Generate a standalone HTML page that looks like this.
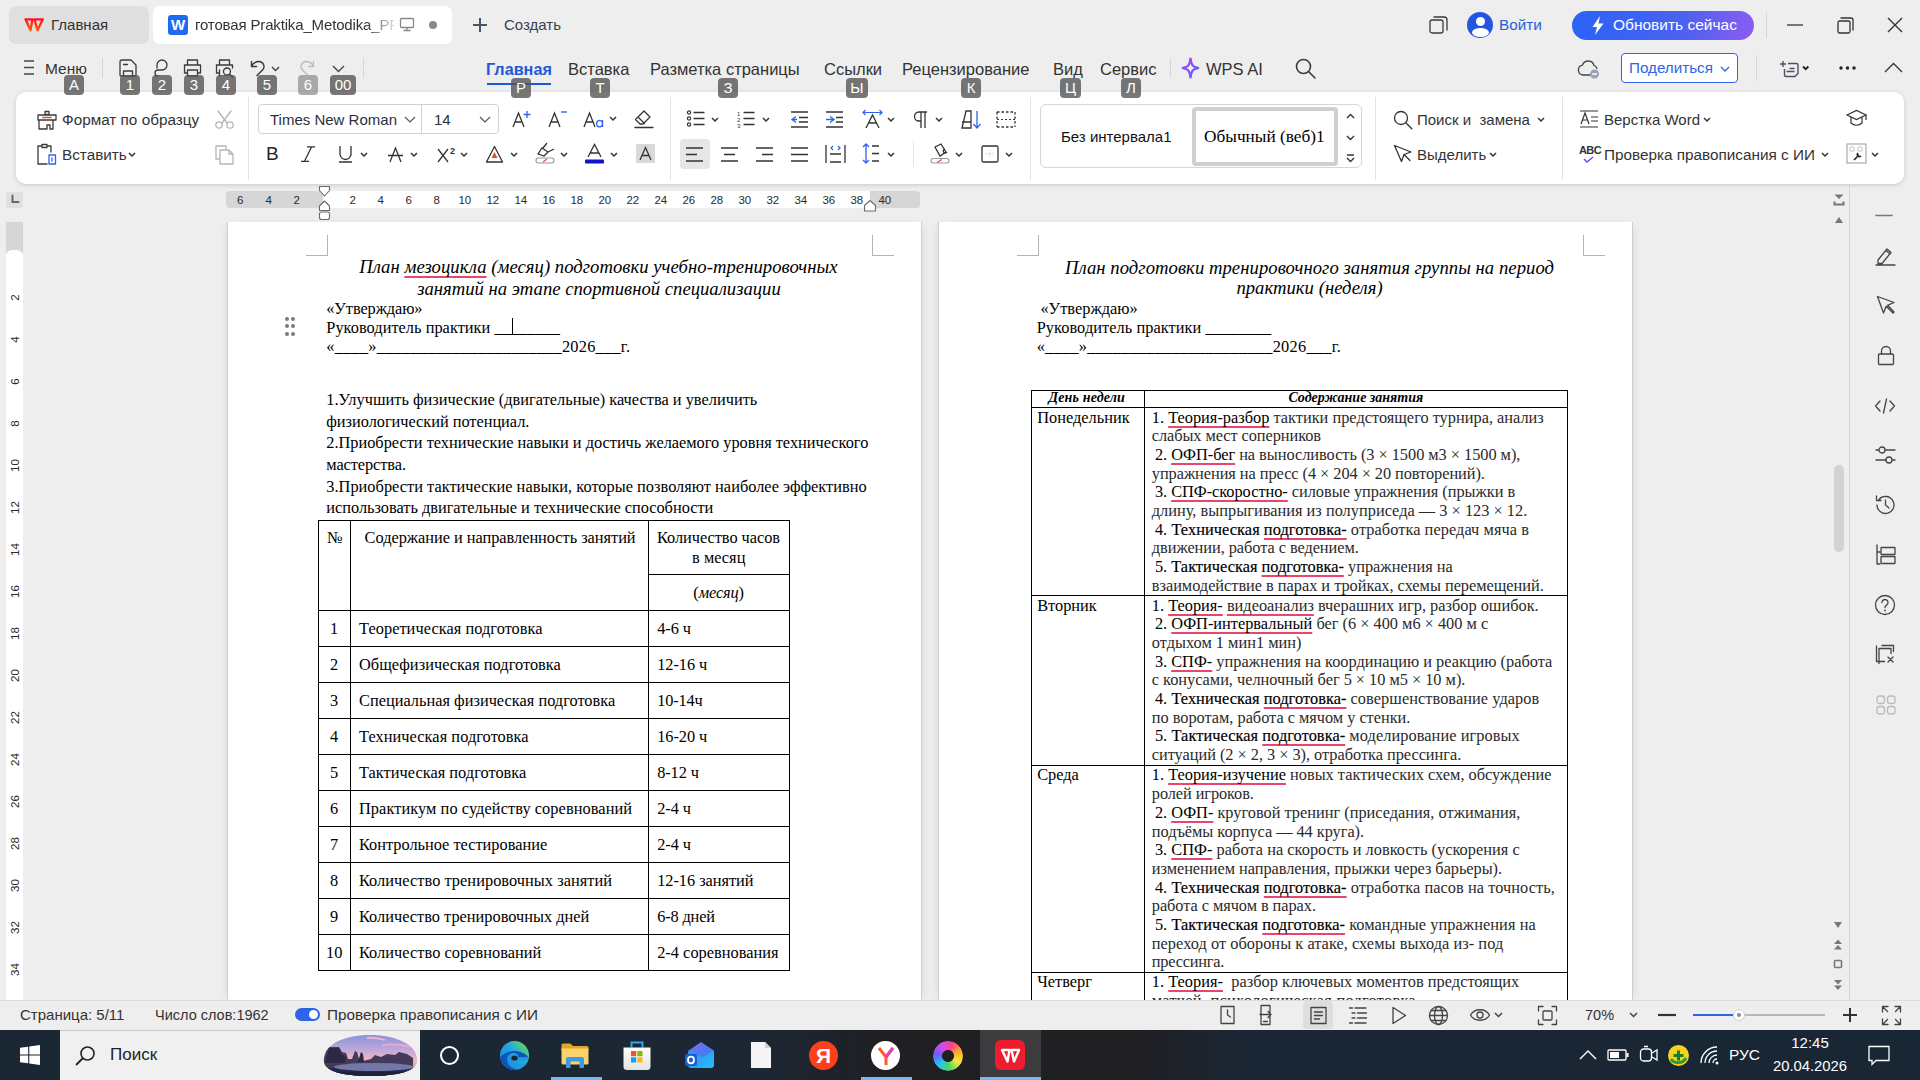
<!DOCTYPE html>
<html><head><meta charset="utf-8">
<style>
*{margin:0;padding:0;box-sizing:border-box}
html,body{width:1920px;height:1080px;overflow:hidden;background:#eeeeee;font-family:"Liberation Sans",sans-serif;color:#262626}
.a{position:absolute}
.t{position:absolute;white-space:nowrap;line-height:20px;height:20px}
.ui{font-size:15px;color:#333}
.bd{position:absolute;height:20px;min-width:20px;padding:0 3px;background:rgba(85,85,85,0.8);color:#fff;border-radius:4px;font-size:15px;line-height:20px;text-align:center}
svg{position:absolute;overflow:visible}
.ic{fill:none;stroke:#3a3a3a;stroke-width:1.3;stroke-linecap:round;stroke-linejoin:round}
.sep{position:absolute;width:1px;background:#d6d6d6}
.serif{font-family:"Liberation Serif",serif;color:#000}
.pg{position:absolute;top:222px;background:#fff;height:778px;overflow:hidden;box-shadow:-1px 0 0 #cdcdcd,1px 0 0 #cdcdcd,-6px 0 8px -4px rgba(0,0,0,0.08),6px 0 8px -4px rgba(0,0,0,0.08)}
.ln{position:absolute;white-space:nowrap;font-family:"Liberation Serif",serif;color:#000}
.sq{text-decoration:underline;text-decoration-color:#e8466e;text-decoration-thickness:1.5px;text-underline-offset:3px;text-decoration-skip-ink:none}
</style></head><body>
<!-- ===== TAB BAR ===== -->
<div class="a" style="left:9px;top:6px;width:140px;height:38px;background:#dfdfdf;border-radius:7px"></div>
<svg style="left:18px;top:12px" width="32" height="24"><defs><linearGradient id="wl" x1="0" y1="0" x2="0" y2="1"><stop offset="0" stop-color="#ff1020"/><stop offset="1" stop-color="#ff5a00"/></linearGradient></defs><path d="M7.5 7.3h7L12.5 18.3zM16.5 7.3h8.3L19.5 18.3z" fill="none" stroke="url(#wl)" stroke-width="2.3" stroke-linejoin="round"/></svg>
<div class="t ui" style="left:51px;top:15px;font-size:15px;color:#333">Главная</div>
<div class="a" style="left:153px;top:6px;width:299px;height:38px;background:#fff;border-radius:7px"></div>
<div class="a" style="left:168px;top:15px;width:20px;height:20px;background:#1f6bf0;border-radius:3px;color:#fff;font-weight:bold;font-size:15px;line-height:20px;text-align:center">W</div>
<div class="t ui" style="left:195px;top:15px;font-size:15px;letter-spacing:-0.15px;color:#333;width:199px;overflow:hidden;-webkit-mask-image:linear-gradient(90deg,#000 86%,rgba(0,0,0,0.15) 100%)">готовая Praktika_Metodika_PF</div>
<svg style="left:400px;top:18px" width="14" height="13" class="ic"><rect x="0.5" y="0.5" width="13" height="9" rx="1" stroke="#888"/><path d="M4 12.5h6M7 10v2.5" stroke="#888"/></svg>
<div class="a" style="left:429px;top:21px;width:8px;height:8px;border-radius:4px;background:#888"></div>
<svg style="left:472px;top:17px" width="16" height="16"><path d="M8 1v14M1 8h14" stroke="#45526b" stroke-width="2"/></svg>
<div class="t ui" style="left:504px;top:15px;font-size:15px;color:#3a4252">Создать</div>
<!-- right window controls -->
<svg style="left:1429px;top:16px" width="19" height="19" class="ic"><rect x="1" y="4" width="13" height="13" rx="2"/><path d="M5 1h10a3 3 0 0 1 3 3v10"/></svg>
<div class="a" style="left:1467px;top:12px;width:26px;height:26px;border-radius:13px;background:#2356e0;overflow:hidden"><div class="a" style="left:8.5px;top:5px;width:9px;height:9px;border-radius:5px;background:#fff"></div><div class="a" style="left:4.5px;top:16px;width:17px;height:9px;border-radius:50%;background:#fff"></div></div>
<div class="t ui" style="left:1499px;top:15px;font-size:15.3px;color:#1f62d6">Войти</div>
<div class="a" style="left:1572px;top:11px;width:182px;height:29px;border-radius:15px;background:linear-gradient(90deg,#2a63f6 0%,#4a62f0 60%,#8a5cf0 100%)"></div>
<svg style="left:1591px;top:16px" width="13" height="19"><path d="M9 0 L1.5 11 H6 L4 19 L12.5 7.5 H7.5 Z" fill="#fff"/></svg>
<div class="t ui" style="left:1613px;top:15px;font-size:15.5px;color:#fff">Обновить сейчас</div>
<div class="sep" style="left:1766px;top:12px;height:26px"></div>
<svg style="left:1787px;top:24px" width="16" height="2"><path d="M0 1h16" stroke="#333" stroke-width="1.3"/></svg>
<svg style="left:1837px;top:17px" width="17" height="17" class="ic"><rect x="1" y="4" width="12" height="12" rx="1.5" stroke="#333"/><path d="M4 1h10a2 2 0 0 1 2 2v10" stroke="#333"/></svg>
<svg style="left:1887px;top:17px" width="16" height="16"><path d="M1 1l14 14M15 1L1 15" stroke="#333" stroke-width="1.4"/></svg>

<!-- ===== MENU ROW ===== -->
<svg style="left:24px;top:60px" width="11" height="15"><path d="M0 1h10M0 7.5h10M0 14h10" stroke="#444" stroke-width="1.3"/></svg>
<div class="t ui" style="left:45px;top:59px;font-size:15.5px">Меню</div>
<div class="sep" style="left:102px;top:58px;height:20px"></div>
<!-- save -->
<svg style="left:119px;top:59px" width="19" height="18" class="ic"><path d="M1 3a2 2 0 0 1 2-2h9l5 5v10a1 1 0 0 1-1 1H2a1 1 0 0 1-1-1z"/><path d="M4.5 17v-5h9v5M4.5 5.5h4"/></svg>
<svg style="left:152px;top:59px" width="17" height="18" class="ic"><path d="M5 9V6a5 5 0 1 1 5 5H6a3 3 0 1 0 0 6"/></svg>
<svg style="left:183px;top:59px" width="19" height="18" class="ic"><path d="M4.5 5V1h10v4M4.5 14H1.5V6h16v8h-3M4.5 11h10v6h-10z"/></svg>
<svg style="left:215px;top:59px" width="19" height="18" class="ic"><path d="M4.5 5V1h10v4M4 14H1.5V6h16v3M4.5 11v6"/><circle cx="12" cy="12.5" r="3.5"/><path d="M14.5 15l3 3"/></svg>
<svg style="left:250px;top:59px" width="16" height="20" class="ic"><path d="M1.5 2.5v5h5M1.5 7.5C3 4 6 2.5 9 2.5a5 5 0 0 1 3.5 8.5L7 16.5" stroke-width="1.4"/></svg>
<svg style="left:271px;top:66px" width="9" height="6"><path d="M1 1l3.5 3.5L8 1" fill="none" stroke="#444" stroke-width="1.4"/></svg>
<svg style="left:299px;top:59px" width="16" height="20" class="ic"><path d="M14.5 2.5v5h-5M14.5 7.5C13 4 10 2.5 7 2.5a5 5 0 0 0-3.5 8.5L9 16.5" stroke="#bdbdbd" stroke-width="1.4"/></svg>
<svg style="left:332px;top:65px" width="13" height="8"><path d="M1 1l5.5 5.5L12 1" fill="none" stroke="#444" stroke-width="1.4"/></svg>
<div class="sep" style="left:363px;top:58px;height:20px"></div>

<div class="t ui" style="left:486px;top:59px;font-size:16.2px;font-weight:bold;color:#1d5ad6">Главная</div>
<div class="a" style="left:487px;top:83px;width:64px;height:2px;background:#1d5ad6"></div>
<div class="t ui" style="left:568px;top:59px;font-size:16.5px">Вставка</div>
<div class="t ui" style="left:650px;top:59px;font-size:16.5px">Разметка страницы</div>
<div class="t ui" style="left:824px;top:59px;font-size:16.5px">Ссылки</div>
<div class="t ui" style="left:902px;top:59px;font-size:16.5px">Рецензирование</div>
<div class="t ui" style="left:1053px;top:59px;font-size:16.5px">Вид</div>
<div class="t ui" style="left:1100px;top:59px;font-size:16.5px">Сервис</div>
<div class="sep" style="left:1170px;top:58px;height:20px"></div>
<svg style="left:1181px;top:57px" width="19" height="22"><defs><linearGradient id="ai" x1="0" y1="0" x2="1" y2="1"><stop offset="0" stop-color="#c33cf4"/><stop offset="1" stop-color="#3b6bff"/></linearGradient></defs><path d="M9.5 1 C10.5 8 11 10 18 11 C11 12 10.5 14 9.5 21 C8.5 14 8 12 1 11 C8 10 8.5 8 9.5 1Z" fill="none" stroke="url(#ai)" stroke-width="2.2"/></svg>
<div class="t ui" style="left:1206px;top:59px;font-size:16.5px">WPS AI</div>
<svg style="left:1295px;top:58px" width="22" height="22" class="ic"><circle cx="8.5" cy="8.5" r="7" stroke-width="1.6"/><path d="M13.5 13.5l6.5 6.5" stroke-width="1.6"/></svg>
<!-- right menu -->
<svg style="left:1577px;top:59px" width="23" height="20" class="ic"><path d="M15 16H6a5 5 0 0 1-.5-9.9A6 6 0 0 1 17 6.5a4.5 4.5 0 0 1 3 3" stroke="#444"/><circle cx="17.5" cy="15" r="4.5" fill="#9aa3b5" stroke="none"/><path d="M15.5 15h4" stroke="#fff"/></svg>
<div class="a" style="left:1621px;top:53px;width:117px;height:30px;border:1.3px solid #2d64e8;border-radius:4px;background:#fff"></div>
<div class="t ui" style="left:1629px;top:58px;font-size:15.2px;color:#2d64e8">Поделиться</div>
<svg style="left:1720px;top:66px" width="10" height="6"><path d="M1 1l4 4 4-4" fill="none" stroke="#2d64e8" stroke-width="1.3"/></svg>
<div class="sep" style="left:1756px;top:55px;height:26px"></div>
<svg style="left:1779px;top:59px" width="32" height="20"><path d="M4 2v6M1 5h6" stroke="#4a5262" stroke-width="1.4"/><path d="M9 4.5h8.5a1.5 1.5 0 0 1 1.5 1.5v8.5l-3 3H7a1.5 1.5 0 0 1-1.5-1.5V10" fill="none" stroke="#4a5262" stroke-width="1.4" stroke-linejoin="round"/><path d="M10.5 9.5h5M7.5 12.5h8" stroke="#4a5262" stroke-width="1.4"/><path d="M24 7.5l2.7 2.7 2.7-2.7" fill="none" stroke="#222" stroke-width="1.8"/></svg>
<svg style="left:1839px;top:66px" width="18" height="4"><circle cx="2" cy="2" r="1.7" fill="#222"/><circle cx="8.5" cy="2" r="1.7" fill="#222"/><circle cx="15" cy="2" r="1.7" fill="#222"/></svg>
<svg style="left:1884px;top:62px" width="19" height="11"><path d="M1 10l8.5-8.5L18 10" fill="none" stroke="#333" stroke-width="1.3"/></svg>

<!-- ===== RIBBON PANEL ===== -->
<div class="a" style="left:16px;top:92px;width:1888px;height:92px;background:#fff;border-radius:10px;box-shadow:0 1px 4px rgba(0,0,0,0.16)"></div>
<!-- badges -->
<div class="bd" style="left:64px;top:75px">A</div>
<div class="bd" style="left:120px;top:75px">1</div>
<div class="bd" style="left:152px;top:75px">2</div>
<div class="bd" style="left:184px;top:75px">3</div>
<div class="bd" style="left:216px;top:75px">4</div>
<div class="bd" style="left:257px;top:75px">5</div>
<div class="bd" style="left:298px;top:75px;background:rgba(150,150,150,0.8)">6</div>
<div class="bd" style="left:330px;top:75px;width:26px">00</div>
<div class="bd" style="left:511px;top:78px">Р</div>
<div class="bd" style="left:590px;top:78px">Т</div>
<div class="bd" style="left:718px;top:78px">З</div>
<div class="bd" style="left:846px;top:78px;width:22px">Ы</div>
<div class="bd" style="left:961px;top:78px">К</div>
<div class="bd" style="left:1060px;top:78px;width:21px">Ц</div>
<div class="bd" style="left:1121px;top:78px">Л</div>

<!-- clipboard group -->
<svg style="left:36px;top:110px" width="22" height="20" class="ic"><path d="M9 1.5h4v3h-4zM2 5h18v5H2zM3 10v9h8v-4h3v4h3v-9"/><path d="M7 7.5h8" stroke="#e0561a" stroke-width="1.6"/></svg>
<div class="t ui" style="left:62px;top:110px;font-size:15.3px">Формат по образцу</div>
<svg style="left:214px;top:110px" width="21" height="19" class="ic"><path d="M4 1l9 12M17 1L8 13" stroke="#b5b5b5"/><circle cx="5" cy="15" r="3.2" stroke="#b5b5b5"/><circle cx="16" cy="15" r="3.2" stroke="#b5b5b5"/></svg>
<svg style="left:36px;top:143px" width="21" height="22" class="ic"><path d="M6 3H2v18h9M15 9V3h-4M6 1.5h5v3H6z"/><rect x="13" y="12" width="6.5" height="9" stroke="#2d64e8"/><path d="M16 15v3" stroke="#2d64e8"/></svg>
<div class="t ui" style="left:62px;top:145px;font-size:15.3px">Вставить</div>
<svg style="left:128px;top:152px" width="8" height="5"><path d="M1 1l3 3 3-3" fill="none" stroke="#333" stroke-width="1.5"/></svg>
<svg style="left:214px;top:144px" width="21" height="21" class="ic"><path d="M5 15H2V2h10v3" stroke="#b5b5b5"/><path d="M6 6h9l4 4v10H6z M15 6v4h4" stroke="#b5b5b5"/></svg>
<div class="sep" style="left:248px;top:97px;height:83px;background:#e3e3e3"></div>

<!-- font group -->
<div class="a" style="left:258px;top:104px;width:241px;height:30px;border:1px solid #d2d2d2;border-radius:4px"></div>
<div class="a" style="left:421px;top:105px;width:1px;height:28px;background:#d2d2d2"></div>
<div class="t ui" style="left:270px;top:110px;color:#2a3240">Times New Roman</div>
<svg style="left:404px;top:116px" width="12" height="7"><path d="M1 1l5 5 5-5" fill="none" stroke="#555" stroke-width="1.2"/></svg>
<div class="t ui" style="left:434px;top:110px;color:#2a3240">14</div>
<svg style="left:479px;top:116px" width="12" height="7"><path d="M1 1l5 5 5-5" fill="none" stroke="#555" stroke-width="1.2"/></svg>
<!-- A+ A- Aa eraser -->
<svg style="left:512px;top:110px" width="20" height="18"><path d="M1 17L6.5 3 12 17M3 12h7" fill="none" stroke="#333" stroke-width="1.3"/><path d="M15 1v7M11.5 4.5h7" stroke="#2d64e8" stroke-width="1.3"/></svg>
<svg style="left:548px;top:110px" width="20" height="18"><path d="M1 17L6.5 3 12 17M3 12h7" fill="none" stroke="#333" stroke-width="1.3"/><path d="M13 2h6" stroke="#2d64e8" stroke-width="1.3"/></svg>
<svg style="left:583px;top:111px" width="22" height="17"><path d="M1 16L6.5 2 12 16M3 11h7" fill="none" stroke="#333" stroke-width="1.3"/><path d="M19.5 9v7M19.5 12.5a3 3.2 0 1 0 0 .2" fill="none" stroke="#2d64e8" stroke-width="1.3"/></svg>
<svg style="left:609px;top:116px" width="8" height="5"><path d="M1 1l3 3 3-3" fill="none" stroke="#333" stroke-width="1.5"/></svg>
<svg style="left:634px;top:109px" width="21" height="20" class="ic"><path d="M6 15L1.5 10.5 10 2l6 6-7 7zM4 8l6.5 6.5M1 18.5h18" stroke="#333"/></svg>
<!-- row 2 -->
<div class="t" style="left:266px;top:144px;font-size:19px;font-weight:normal;color:#262626;line-height:20px">B</div>
<svg style="left:300px;top:146px" width="16" height="16"><path d="M9 15.3H1M15 .8H7M11.5 1L4.5 15.3" fill="none" stroke="#333" stroke-width="1.3"/></svg>
<svg style="left:338px;top:145px" width="15" height="18"><path d="M2 1v8a5.5 5.5 0 0 0 11 0V1M1 17h13" fill="none" stroke="#333" stroke-width="1.3"/></svg>
<svg style="left:360px;top:152px" width="8" height="5"><path d="M1 1l3 3 3-3" fill="none" stroke="#333" stroke-width="1.5"/></svg>
<svg style="left:387px;top:146px" width="17" height="17"><path d="M3 16L8.5 2 14 16M1 9.5h15" fill="none" stroke="#333" stroke-width="1.3"/></svg>
<svg style="left:410px;top:152px" width="8" height="5"><path d="M1 1l3 3 3-3" fill="none" stroke="#333" stroke-width="1.5"/></svg>
<svg style="left:437px;top:145px" width="21" height="18"><path d="M1 4l10 13M11 4L1 17" fill="none" stroke="#333" stroke-width="1.3"/><text x="13" y="9" font-size="9" font-family="Liberation Sans" fill="#333" font-weight="bold">2</text></svg>
<svg style="left:460px;top:152px" width="8" height="5"><path d="M1 1l3 3 3-3" fill="none" stroke="#333" stroke-width="1.5"/></svg>
<svg style="left:485px;top:145px" width="19" height="18"><path d="M1.5 17L9.5 1.5 17.5 17z" fill="none" stroke="#333" stroke-width="1.3" stroke-linejoin="round"/><path d="M6.5 13L9.5 7 12.5 13z" fill="#e0561a"/></svg>
<svg style="left:510px;top:152px" width="8" height="5"><path d="M1 1l3 3 3-3" fill="none" stroke="#333" stroke-width="1.5"/></svg>
<svg style="left:535px;top:142px" width="20" height="22"><path d="M3 12l4-6 6 4-4 4zM8 6l4-5M13 10l6-3" fill="none" stroke="#333" stroke-width="1.3"/><rect x="1" y="16" width="18" height="5" rx="2.5" fill="none" stroke="#999" stroke-width="1.1"/><path d="M8 20l4-3" stroke="#e8466e" stroke-width="1.2"/></svg>
<svg style="left:560px;top:152px" width="8" height="5"><path d="M1 1l3 3 3-3" fill="none" stroke="#333" stroke-width="1.5"/></svg>
<svg style="left:585px;top:143px" width="19" height="21"><path d="M3 14L9.5 1.5 16 14M5 10h9" fill="none" stroke="#333" stroke-width="1.3"/><rect x="0" y="16.5" width="19" height="4" rx="1" fill="#1212c8"/></svg>
<svg style="left:610px;top:152px" width="8" height="5"><path d="M1 1l3 3 3-3" fill="none" stroke="#333" stroke-width="1.5"/></svg>
<div class="a" style="left:636px;top:144px;width:19px;height:19px;background:#d9d9d9"></div>
<svg style="left:638px;top:146px" width="15" height="15"><path d="M2 14L7.5 1.5 13 14M4 9.5h7" fill="none" stroke="#333" stroke-width="1.3"/></svg>
<div class="sep" style="left:670px;top:97px;height:83px;background:#e3e3e3"></div>

<!-- paragraph group -->
<svg style="left:687px;top:110px" width="18" height="17"><circle cx="2" cy="2.5" r="1.6" fill="none" stroke="#333" stroke-width="1.2"/><circle cx="2" cy="8.5" r="1.6" fill="none" stroke="#333" stroke-width="1.2"/><circle cx="2" cy="14.5" r="1.6" fill="none" stroke="#333" stroke-width="1.2"/><path d="M6.5 2.5h11M6.5 8.5h11M6.5 14.5h11" stroke="#333" stroke-width="1.3"/></svg>
<svg style="left:711px;top:117px" width="8" height="5"><path d="M1 1l3 3 3-3" fill="none" stroke="#333" stroke-width="1.5"/></svg>
<svg style="left:737px;top:110px" width="19" height="18"><text x="0" y="6" font-size="6" font-family="Liberation Sans" fill="#333">1</text><text x="0" y="12" font-size="6" font-family="Liberation Sans" fill="#333">2</text><text x="0" y="18" font-size="6" font-family="Liberation Sans" fill="#333">3</text><path d="M6.5 2.5h11M6.5 8.5h11M6.5 14.5h11" stroke="#333" stroke-width="1.3"/></svg>
<svg style="left:762px;top:117px" width="8" height="5"><path d="M1 1l3 3 3-3" fill="none" stroke="#333" stroke-width="1.5"/></svg>
<svg style="left:790px;top:111px" width="19" height="17"><path d="M1 1h17M1 16h17M9 6.5h9M9 11h9" stroke="#333" stroke-width="1.3"/><path d="M6 5.5L2 8.5l4 3M2 8.5h5" fill="none" stroke="#2d64e8" stroke-width="1.3"/></svg>
<svg style="left:825px;top:111px" width="19" height="17"><path d="M1 1h17M1 16h17M11 6.5h7M11 11h7" stroke="#333" stroke-width="1.3"/><path d="M5 5.5l4 3-4 3M1 8.5h8" fill="none" stroke="#2d64e8" stroke-width="1.3"/></svg>
<svg style="left:862px;top:109px" width="21" height="20"><path d="M4 19L10.5 6 17 19M6.5 14h8" fill="none" stroke="#333" stroke-width="1.3"/><path d="M1 3.5h19M3.5 1L1 3.5 3.5 6M17.5 1L20 3.5 17.5 6" fill="none" stroke="#2d64e8" stroke-width="1.2"/></svg>
<svg style="left:887px;top:117px" width="8" height="5"><path d="M1 1l3 3 3-3" fill="none" stroke="#333" stroke-width="1.5"/></svg>
<svg style="left:913px;top:111px" width="15" height="17"><path d="M8 1v16M12 1v16M14 1H6a4.5 4.5 0 0 0 0 9h2" fill="none" stroke="#333" stroke-width="1.3"/></svg>
<svg style="left:935px;top:117px" width="8" height="5"><path d="M1 1l3 3 3-3" fill="none" stroke="#333" stroke-width="1.5"/></svg>
<svg style="left:961px;top:110px" width="21" height="19"><path d="M1 18L5 1h5v17zM1 12h9" fill="none" stroke="#333" stroke-width="1.3"/><path d="M16 1v17M12.5 14l3.5 4 3.5-4" fill="none" stroke="#2d64e8" stroke-width="1.3"/></svg>
<svg style="left:996px;top:111px" width="20" height="17"><path d="M1 1h18M1 16h18M1 1v15M19 1v15" fill="none" stroke="#333" stroke-width="1.3" stroke-dasharray="2.5 2"/><path d="M1 8.5h18" stroke="#333" stroke-width="1.1" stroke-dasharray="2 2"/></svg>
<!-- row 2 -->
<div class="a" style="left:680px;top:139px;width:30px;height:30px;background:#e6e6e6;border-radius:4px"></div>
<svg style="left:685px;top:147px" width="19" height="15"><path d="M1 1h17M1 7.5h11M1 14h17" stroke="#333" stroke-width="1.3"/></svg>
<svg style="left:720px;top:147px" width="19" height="15"><path d="M1 1h17M4 7.5h11M1 14h17" stroke="#333" stroke-width="1.3"/></svg>
<svg style="left:755px;top:147px" width="19" height="15"><path d="M1 1h17M7 7.5h11M1 14h17" stroke="#333" stroke-width="1.3"/></svg>
<svg style="left:790px;top:147px" width="19" height="15"><path d="M1 1h17M1 7.5h17M1 14h17" stroke="#333" stroke-width="1.3"/></svg>
<svg style="left:825px;top:144px" width="21" height="20"><path d="M1 1v18M20 1v18M5 10h11M5 18h11" stroke="#333" stroke-width="1.3"/><path d="M8 2L6 4l2 2M13 2l2 2-2 2" fill="none" stroke="#2d64e8" stroke-width="1.2"/></svg>
<svg style="left:862px;top:143px" width="18" height="21"><path d="M4 1v19M1 4l3-3 3 3M1 17l3 3 3-3" fill="none" stroke="#2d64e8" stroke-width="1.3"/><path d="M10 3h7M10 10.5h7M10 18h7" stroke="#333" stroke-width="1.3"/></svg>
<svg style="left:887px;top:152px" width="8" height="5"><path d="M1 1l3 3 3-3" fill="none" stroke="#333" stroke-width="1.5"/></svg>
<div class="sep" style="left:913px;top:141px;height:26px;background:#e3e3e3"></div>
<svg style="left:930px;top:143px" width="20" height="21"><path d="M5 4l6-3 5 8-6 4zM15 6a2 2 0 1 0 2 3" fill="none" stroke="#333" stroke-width="1.3"/><rect x="1" y="15.5" width="18" height="4.5" rx="2.2" fill="none" stroke="#999" stroke-width="1.1"/><path d="M7 19.5l5-3" stroke="#e8466e" stroke-width="1.2"/></svg>
<svg style="left:955px;top:152px" width="8" height="5"><path d="M1 1l3 3 3-3" fill="none" stroke="#333" stroke-width="1.5"/></svg>
<svg style="left:981px;top:145px" width="18" height="18"><rect x="1" y="1" width="16" height="16" rx="1.5" fill="none" stroke="#333" stroke-width="1.3"/><path d="M9 5v8M5 9h8" stroke="#bbb" stroke-width="0.8" stroke-dasharray="1 1"/></svg>
<svg style="left:1005px;top:152px" width="8" height="5"><path d="M1 1l3 3 3-3" fill="none" stroke="#333" stroke-width="1.5"/></svg>
<div class="sep" style="left:1030px;top:97px;height:83px;background:#e3e3e3"></div>

<!-- styles -->
<div class="a" style="left:1040px;top:104px;width:322px;height:64px;border:1px solid #d6d6d6;border-radius:6px"></div>
<div class="t ui" style="left:1061px;top:127px;font-size:15px;color:#111">Без интервала1</div>
<div class="a" style="left:1192px;top:107px;width:146px;height:59px;border:4px solid #d0d0d0;border-radius:4px"></div>
<div class="t serif" style="left:1204px;top:127px;font-size:17.3px;color:#000">Обычный (веб)1</div>
<svg style="left:1346px;top:113px" width="9" height="6"><path d="M1 5l3.5-3.5L8 5" fill="none" stroke="#333" stroke-width="1.4"/></svg>
<svg style="left:1346px;top:135px" width="9" height="6"><path d="M1 1l3.5 3.5L8 1" fill="none" stroke="#333" stroke-width="1.4"/></svg>
<svg style="left:1346px;top:154px" width="9" height="9"><path d="M1 1h7M1 4l3.5 3.5L8 4" fill="none" stroke="#333" stroke-width="1.4"/></svg>
<div class="sep" style="left:1375px;top:97px;height:83px;background:#e3e3e3"></div>

<!-- find -->
<svg style="left:1393px;top:110px" width="20" height="20" class="ic"><circle cx="8" cy="8" r="6.5" stroke="#333"/><path d="M12.8 12.8l6 6" stroke="#333"/></svg>
<div class="t ui" style="left:1417px;top:110px">Поиск и&nbsp; замена</div>
<svg style="left:1537px;top:117px" width="8" height="5"><path d="M1 1l3 3 3-3" fill="none" stroke="#333" stroke-width="1.5"/></svg>
<svg style="left:1393px;top:144px" width="20" height="19" class="ic"><path d="M1.5 1.5L18 8l-7 2.5-2.5 7z M11 10.5l6 6" stroke="#333"/></svg>
<div class="t ui" style="left:1417px;top:145px">Выделить</div>
<svg style="left:1489px;top:152px" width="8" height="5"><path d="M1 1l3 3 3-3" fill="none" stroke="#333" stroke-width="1.5"/></svg>
<div class="sep" style="left:1562px;top:97px;height:83px;background:#e3e3e3"></div>

<svg style="left:1579px;top:110px" width="20" height="18"><path d="M1 1h18M1 17h18M2 14L6 3l4 11M3.5 10h5M12 7h7M12 11h7" fill="none" stroke="#333" stroke-width="1.2"/></svg>
<div class="t ui" style="left:1604px;top:110px">Верстка Word</div>
<svg style="left:1703px;top:117px" width="8" height="5"><path d="M1 1l3 3 3-3" fill="none" stroke="#333" stroke-width="1.5"/></svg>
<svg style="left:1579px;top:144px" width="22" height="21"><text x="0" y="10" font-size="11" font-family="Liberation Sans" font-weight="bold" fill="#333" letter-spacing="-0.6">ABC</text><path d="M5 15l3 3 6-5" fill="none" stroke="#7b3cf0" stroke-width="1.4"/></svg>
<div class="t ui" style="left:1604px;top:145px;font-size:15.3px">Проверка правописания с ИИ</div>
<svg style="left:1821px;top:152px" width="8" height="5"><path d="M1 1l3 3 3-3" fill="none" stroke="#333" stroke-width="1.5"/></svg>
<svg style="left:1846px;top:109px" width="21" height="18"><path d="M1 6L10.5 1.5 20 6 10.5 10.5z M5 8v6c3 3 8 3 11 0V8M20 6v5" fill="none" stroke="#333" stroke-width="1.2"/></svg>
<svg style="left:1846px;top:143px" width="22" height="22"><rect x="1" y="1" width="19" height="19" fill="none" stroke="#999" stroke-width="1"/><path d="M4 4h4v4H4zM12 4h4v4h-4z" fill="none" stroke="#bbb" stroke-width="0.8"/><path d="M8 17l5-5M12 10a2 2 0 1 0 3 3" fill="none" stroke="#222" stroke-width="1.6"/></svg>
<svg style="left:1871px;top:152px" width="8" height="5"><path d="M1 1l3 3 3-3" fill="none" stroke="#333" stroke-width="1.5"/></svg>


<!-- ===== RULER ===== -->
<div class="a" style="left:6px;top:192px;width:17px;height:16px;background:#e0e0e0;border-radius:3px"></div>
<svg style="left:11px;top:194px" width="9" height="10"><path d="M1.5 1.5v6.5H7.5" fill="none" stroke="#666" stroke-width="2" stroke-linecap="round"/></svg>
<div class="a" style="left:226px;top:191px;width:694px;height:17px;background:#d6d6d6;border-radius:4px"></div>
<div class="a" style="left:323px;top:191px;width:547px;height:17px;background:#fff"></div>


<!-- ===== DOC AREA ===== -->
<div class="pg" style="left:228px;width:693px" id="p1"></div>
<div class="pg" style="left:939px;width:693px" id="p2"></div>
<div class="a" style="left:318px;top:520px;width:1px;height:451px;background:#000"></div>
<div class="a" style="left:350px;top:520px;width:1px;height:451px;background:#000"></div>
<div class="a" style="left:648px;top:520px;width:1px;height:451px;background:#000"></div>
<div class="a" style="left:789px;top:520px;width:1px;height:451px;background:#000"></div>
<div class="a" style="left:318px;top:520px;width:472px;height:1px;background:#000"></div>
<div class="a" style="left:318px;top:610px;width:472px;height:1px;background:#000"></div>
<div class="a" style="left:318px;top:646px;width:472px;height:1px;background:#000"></div>
<div class="a" style="left:318px;top:682px;width:472px;height:1px;background:#000"></div>
<div class="a" style="left:318px;top:718px;width:472px;height:1px;background:#000"></div>
<div class="a" style="left:318px;top:754px;width:472px;height:1px;background:#000"></div>
<div class="a" style="left:318px;top:790px;width:472px;height:1px;background:#000"></div>
<div class="a" style="left:318px;top:826px;width:472px;height:1px;background:#000"></div>
<div class="a" style="left:318px;top:862px;width:472px;height:1px;background:#000"></div>
<div class="a" style="left:318px;top:898px;width:472px;height:1px;background:#000"></div>
<div class="a" style="left:318px;top:934px;width:472px;height:1px;background:#000"></div>
<div class="a" style="left:318px;top:970px;width:472px;height:1px;background:#000"></div>
<div class="a" style="left:648px;top:574px;width:142px;height:1px;background:#000"></div>
<div class="a" style="left:1031px;top:390px;width:1px;height:611px;background:#000"></div>
<div class="a" style="left:1144px;top:390px;width:1px;height:611px;background:#000"></div>
<div class="a" style="left:1567px;top:390px;width:1px;height:611px;background:#000"></div>
<div class="a" style="left:1031px;top:390px;width:537px;height:1px;background:#000"></div>
<div class="a" style="left:1031px;top:407px;width:537px;height:1px;background:#000"></div>
<div class="a" style="left:1031px;top:595px;width:537px;height:1px;background:#000"></div>
<div class="a" style="left:1031px;top:765px;width:537px;height:1px;background:#000"></div>
<div class="a" style="left:1031px;top:972px;width:537px;height:1px;background:#000"></div>
<div class="a" style="left:327px;top:235px;width:1px;height:21px;background:#b4b4b4"></div>
<div class="a" style="left:306px;top:255px;width:22px;height:1px;background:#b4b4b4"></div>
<div class="a" style="left:872px;top:235px;width:1px;height:21px;background:#b4b4b4"></div>
<div class="a" style="left:872px;top:255px;width:22px;height:1px;background:#b4b4b4"></div>
<div class="a" style="left:1038px;top:235px;width:1px;height:21px;background:#b4b4b4"></div>
<div class="a" style="left:1017px;top:255px;width:22px;height:1px;background:#b4b4b4"></div>
<div class="a" style="left:1583px;top:235px;width:1px;height:21px;background:#b4b4b4"></div>
<div class="a" style="left:1583px;top:255px;width:22px;height:1px;background:#b4b4b4"></div>
<div class="a" style="left:284.9px;top:317.2px;width:4px;height:4px;border-radius:2px;background:#7a7a7a"></div>
<div class="a" style="left:284.9px;top:324.4px;width:4px;height:4px;border-radius:2px;background:#7a7a7a"></div>
<div class="a" style="left:284.9px;top:331.7px;width:4px;height:4px;border-radius:2px;background:#7a7a7a"></div>
<div class="a" style="left:291.1px;top:317.2px;width:4px;height:4px;border-radius:2px;background:#7a7a7a"></div>
<div class="a" style="left:291.1px;top:324.4px;width:4px;height:4px;border-radius:2px;background:#7a7a7a"></div>
<div class="a" style="left:291.1px;top:331.7px;width:4px;height:4px;border-radius:2px;background:#7a7a7a"></div>
<div class="a" style="left:511.5px;top:318px;width:1.5px;height:17px;background:#000"></div>
<div class="ln" style="left:359.2px;top:255.9px;font-size:18.67px;font-style:italic;letter-spacing:0.036px">План <span class="sq" style="">мезоцикла</span> (месяц) подготовки учебно-тренировочных</div>
<div class="ln" style="left:417.2px;top:277.6px;font-size:18.67px;font-style:italic;letter-spacing:0.008px">занятий на этапе спортивной специализации</div>
<div class="ln" style="left:326.3px;top:298.8px;font-size:16.33px;letter-spacing:-0.089px">«Утверждаю»</div>
<div class="ln" style="left:326.3px;top:317.5px;font-size:16.33px;letter-spacing:0.034px">Руководитель практики ________</div>
<div class="ln" style="left:326.3px;top:336.6px;font-size:16.33px;letter-spacing:0.250px">«____»______________________2026___г.</div>
<div class="ln" style="left:326.3px;top:389.6px;font-size:16.33px;letter-spacing:0.020px">1.Улучшить физические (двигательные) качества и увеличить</div>
<div class="ln" style="left:326.3px;top:411.7px;font-size:16.33px;letter-spacing:-0.025px">физиологический потенциал.</div>
<div class="ln" style="left:326.3px;top:433.3px;font-size:16.33px;letter-spacing:-0.007px">2.Приобрести технические навыки и достичь желаемого уровня технического</div>
<div class="ln" style="left:326.3px;top:455.2px;font-size:16.33px;letter-spacing:-0.077px">мастерства.</div>
<div class="ln" style="left:326.3px;top:476.7px;font-size:16.33px;letter-spacing:0.024px">3.Приобрести тактические навыки, которые позволяют наиболее эффективно</div>
<div class="ln" style="left:326.3px;top:498.1px;font-size:16.33px;letter-spacing:-0.010px">использовать двигательные и технические способности</div>
<div class="ln" style="left:327.0px;top:528.4px;font-size:16.33px">№</div>
<div class="ln" style="left:364.6px;top:528.4px;font-size:16.33px;letter-spacing:-0.023px">Содержание и направленность занятий</div>
<div class="ln" style="left:657.0px;top:528.4px;font-size:16.33px;letter-spacing:-0.040px">Количество часов</div>
<div class="ln" style="left:692.1px;top:547.5px;font-size:16.33px">в месяц</div>
<div class="ln" style="left:693.3px;top:583.0px;font-size:16.33px;letter-spacing:-0.107px">(<span style="font-style:italic">месяц</span>)</div>
<div class="ln" style="left:330.1px;top:619.1px;font-size:16.33px">1</div>
<div class="ln" style="left:359.0px;top:619.1px;font-size:16.33px;letter-spacing:0.052px">Теоретическая подготовка</div>
<div class="ln" style="left:657.2px;top:619.1px;font-size:16.33px;letter-spacing:-0.066px">4-6 ч</div>
<div class="ln" style="left:330.1px;top:655.1px;font-size:16.33px">2</div>
<div class="ln" style="left:359.0px;top:655.1px;font-size:16.33px;letter-spacing:0.035px">Общефизическая подготовка</div>
<div class="ln" style="left:657.2px;top:655.1px;font-size:16.33px;letter-spacing:-0.048px">12-16 ч</div>
<div class="ln" style="left:330.1px;top:691.1px;font-size:16.33px">3</div>
<div class="ln" style="left:359.0px;top:691.1px;font-size:16.33px;letter-spacing:0.014px">Специальная физическая подготовка</div>
<div class="ln" style="left:657.2px;top:691.1px;font-size:16.33px;letter-spacing:-0.163px">10-14ч</div>
<div class="ln" style="left:330.1px;top:727.1px;font-size:16.33px">4</div>
<div class="ln" style="left:359.0px;top:727.1px;font-size:16.33px;letter-spacing:0.058px">Техническая подготовка</div>
<div class="ln" style="left:657.2px;top:727.1px;font-size:16.33px;letter-spacing:-0.048px">16-20 ч</div>
<div class="ln" style="left:330.1px;top:763.1px;font-size:16.33px">5</div>
<div class="ln" style="left:359.0px;top:763.1px;font-size:16.33px;letter-spacing:0.026px">Тактическая подготовка</div>
<div class="ln" style="left:657.2px;top:763.1px;font-size:16.33px;letter-spacing:-0.087px">8-12 ч</div>
<div class="ln" style="left:330.1px;top:799.1px;font-size:16.33px">6</div>
<div class="ln" style="left:359.0px;top:799.1px;font-size:16.33px;letter-spacing:0.074px">Практикум по судейству соревнований</div>
<div class="ln" style="left:657.2px;top:799.1px;font-size:16.33px;letter-spacing:-0.066px">2-4 ч</div>
<div class="ln" style="left:330.1px;top:835.1px;font-size:16.33px">7</div>
<div class="ln" style="left:359.0px;top:835.1px;font-size:16.33px">Контрольное тестирование</div>
<div class="ln" style="left:657.2px;top:835.1px;font-size:16.33px;letter-spacing:-0.066px">2-4 ч</div>
<div class="ln" style="left:330.1px;top:871.1px;font-size:16.33px">8</div>
<div class="ln" style="left:359.0px;top:871.1px;font-size:16.33px;letter-spacing:0.044px">Количество тренировочных занятий</div>
<div class="ln" style="left:657.2px;top:871.1px;font-size:16.33px;letter-spacing:-0.036px">12-16 занятий</div>
<div class="ln" style="left:330.1px;top:907.1px;font-size:16.33px">9</div>
<div class="ln" style="left:359.0px;top:907.1px;font-size:16.33px;letter-spacing:0.007px">Количество тренировочных дней</div>
<div class="ln" style="left:657.2px;top:907.1px;font-size:16.33px;letter-spacing:-0.156px">6-8 дней</div>
<div class="ln" style="left:326.0px;top:943.1px;font-size:16.33px">10</div>
<div class="ln" style="left:359.0px;top:943.1px;font-size:16.33px;letter-spacing:0.041px">Количество соревнований</div>
<div class="ln" style="left:657.2px;top:943.1px;font-size:16.33px;letter-spacing:0.019px">2-4 соревнования</div>
<div class="ln" style="left:1065.0px;top:256.7px;font-size:18.67px;font-style:italic;letter-spacing:0.051px">План подготовки тренировочного занятия группы на период</div>
<div class="ln" style="left:1236.4px;top:277.3px;font-size:18.67px;font-style:italic;letter-spacing:0.032px">практики (неделя)</div>
<div class="ln" style="left:1040.4px;top:299.0px;font-size:16.33px;letter-spacing:0.021px">«Утверждаю»</div>
<div class="ln" style="left:1036.7px;top:317.8px;font-size:16.33px;letter-spacing:0.065px">Руководитель практики ________</div>
<div class="ln" style="left:1036.7px;top:337.4px;font-size:16.33px;letter-spacing:0.264px">«____»______________________2026___г.</div>
<div class="ln" style="left:1048.5px;top:390.3px;font-size:14px;font-style:italic;font-weight:bold;letter-spacing:0.153px">День недели</div>
<div class="ln" style="left:1288.4px;top:390.3px;font-size:14px;font-style:italic;font-weight:bold">Содержание занятия</div>
<div class="ln" style="left:1037.2px;top:407.5px;font-size:16.33px;letter-spacing:0.020px">Понедельник</div>
<div class="ln" style="left:1151.8px;top:407.5px;font-size:16.33px;letter-spacing:0.008px">1. <span class="sq" style="">Теория-разбор</span><span style="color:#2a2a2a"> тактики предстоящего турнира, анализ</span></div>
<div class="ln" style="left:1151.8px;top:426.2px;font-size:16.33px;letter-spacing:-0.069px"><span style="color:#2a2a2a">слабых мест соперников</span></div>
<div class="ln" style="left:1154.9px;top:444.9px;font-size:16.33px;letter-spacing:-0.031px">2. <span class="sq" style="">ОФП-бег</span><span style="color:#2a2a2a"> на выносливость (3 × 1500 м3 × 1500 м),</span></div>
<div class="ln" style="left:1151.8px;top:463.6px;font-size:16.33px;letter-spacing:-0.054px"><span style="color:#2a2a2a">упражнения на пресс (4 × 204 × 20 повторений).</span></div>
<div class="ln" style="left:1154.9px;top:482.3px;font-size:16.33px;letter-spacing:-0.027px">3. <span class="sq" style="">СПФ-скоростно-</span><span style="color:#2a2a2a"> силовые упражнения (прыжки в</span></div>
<div class="ln" style="left:1151.8px;top:501.0px;font-size:16.33px;letter-spacing:0.017px"><span style="color:#2a2a2a">длину, выпрыгивания из полуприседа — 3 × 123 × 12.</span></div>
<div class="ln" style="left:1154.9px;top:519.7px;font-size:16.33px;letter-spacing:0.064px">4. <span style="-webkit-text-stroke:0.18px #000">Техническая </span><span class="sq" style="-webkit-text-stroke:0.18px #000">подготовка-</span><span style="color:#2a2a2a"> отработка передач мяча в</span></div>
<div class="ln" style="left:1151.8px;top:538.4px;font-size:16.33px;letter-spacing:-0.054px"><span style="color:#2a2a2a">движении, работа с ведением.</span></div>
<div class="ln" style="left:1154.9px;top:557.1px;font-size:16.33px;letter-spacing:0.017px">5. <span style="-webkit-text-stroke:0.18px #000">Тактическая </span><span class="sq" style="-webkit-text-stroke:0.18px #000">подготовка-</span><span style="color:#2a2a2a"> упражнения на</span></div>
<div class="ln" style="left:1151.8px;top:575.8px;font-size:16.33px;letter-spacing:-0.021px"><span style="color:#2a2a2a">взаимодействие в парах и тройках, схемы перемещений.</span></div>
<div class="ln" style="left:1037.2px;top:595.5px;font-size:16.33px">Вторник</div>
<div class="ln" style="left:1151.8px;top:595.5px;font-size:16.33px;letter-spacing:0.006px">1. <span class="sq" style="">Теория-</span><span style="color:#2a2a2a"> </span><span class="sq" style="color:#2a2a2a">видеоанализ</span><span style="color:#2a2a2a"> вчерашних игр, разбор ошибок.</span></div>
<div class="ln" style="left:1154.9px;top:614.2px;font-size:16.33px">2. <span class="sq" style="">ОФП-интервальный</span><span style="color:#2a2a2a"> бег (6 × 400 м6 × 400 м с</span></div>
<div class="ln" style="left:1151.8px;top:632.9px;font-size:16.33px;letter-spacing:0.010px"><span style="color:#2a2a2a">отдыхом 1 мин1 мин)</span></div>
<div class="ln" style="left:1154.9px;top:651.6px;font-size:16.33px">3. <span class="sq" style="">СПФ-</span><span style="color:#2a2a2a"> упражнения на координацию и реакцию (работа</span></div>
<div class="ln" style="left:1151.8px;top:670.3px;font-size:16.33px;letter-spacing:-0.020px"><span style="color:#2a2a2a">с конусами, челночный бег 5 × 10 м5 × 10 м).</span></div>
<div class="ln" style="left:1154.9px;top:689.0px;font-size:16.33px;letter-spacing:0.053px">4. <span style="-webkit-text-stroke:0.18px #000">Техническая </span><span class="sq" style="-webkit-text-stroke:0.18px #000">подготовка-</span><span style="color:#2a2a2a"> совершенствование ударов</span></div>
<div class="ln" style="left:1151.8px;top:707.7px;font-size:16.33px;letter-spacing:-0.020px"><span style="color:#2a2a2a">по воротам, работа с мячом у стенки.</span></div>
<div class="ln" style="left:1154.9px;top:726.4px;font-size:16.33px;letter-spacing:0.069px">5. <span style="-webkit-text-stroke:0.18px #000">Тактическая </span><span class="sq" style="-webkit-text-stroke:0.18px #000">подготовка-</span><span style="color:#2a2a2a"> моделирование игровых</span></div>
<div class="ln" style="left:1151.8px;top:745.1px;font-size:16.33px;letter-spacing:-0.027px"><span style="color:#2a2a2a">ситуаций (2 × 2, 3 × 3), отработка прессинга.</span></div>
<div class="ln" style="left:1037.2px;top:765.4px;font-size:16.33px">Среда</div>
<div class="ln" style="left:1151.8px;top:765.4px;font-size:16.33px">1. <span class="sq" style="">Теория-изучение</span><span style="color:#2a2a2a"> новых тактических схем, обсуждение</span></div>
<div class="ln" style="left:1151.8px;top:784.1px;font-size:16.33px;letter-spacing:-0.081px"><span style="color:#2a2a2a">ролей игроков.</span></div>
<div class="ln" style="left:1154.9px;top:802.8px;font-size:16.33px">2. <span class="sq" style="">ОФП-</span><span style="color:#2a2a2a"> круговой тренинг (приседания, отжимания,</span></div>
<div class="ln" style="left:1151.8px;top:821.5px;font-size:16.33px;letter-spacing:-0.036px"><span style="color:#2a2a2a">подъёмы корпуса — 44 круга).</span></div>
<div class="ln" style="left:1154.9px;top:840.2px;font-size:16.33px;letter-spacing:0.031px">3. <span class="sq" style="">СПФ-</span><span style="color:#2a2a2a"> работа на скорость и ловкость (ускорения с</span></div>
<div class="ln" style="left:1151.8px;top:858.9px;font-size:16.33px;letter-spacing:-0.042px"><span style="color:#2a2a2a">изменением направления, прыжки через барьеры).</span></div>
<div class="ln" style="left:1154.9px;top:877.6px;font-size:16.33px;letter-spacing:0.059px">4. <span style="-webkit-text-stroke:0.18px #000">Техническая </span><span class="sq" style="-webkit-text-stroke:0.18px #000">подготовка-</span><span style="color:#2a2a2a"> отработка пасов на точность,</span></div>
<div class="ln" style="left:1151.8px;top:896.3px;font-size:16.33px;letter-spacing:-0.056px"><span style="color:#2a2a2a">работа с мячом в парах.</span></div>
<div class="ln" style="left:1154.9px;top:915.0px;font-size:16.33px;letter-spacing:0.062px">5. <span style="-webkit-text-stroke:0.18px #000">Тактическая </span><span class="sq" style="-webkit-text-stroke:0.18px #000">подготовка-</span><span style="color:#2a2a2a"> командные упражнения на</span></div>
<div class="ln" style="left:1151.8px;top:933.7px;font-size:16.33px;letter-spacing:0.040px"><span style="color:#2a2a2a">переход от обороны к атаке, схемы выхода из- под</span></div>
<div class="ln" style="left:1151.8px;top:952.4px;font-size:16.33px;letter-spacing:-0.229px"><span style="color:#2a2a2a">прессинга.</span></div>
<div class="ln" style="left:1037.2px;top:971.9px;font-size:16.33px">Четверг</div>
<div class="ln" style="left:1151.8px;top:971.9px;font-size:16.33px;letter-spacing:0.024px">1. <span class="sq" style="">Теория-</span><span style="color:#2a2a2a"> &nbsp;разбор ключевых моментов предстоящих</span></div>
<div class="ln" style="left:1151.8px;top:990.6px;font-size:16.33px;letter-spacing:0.272px"><span style="color:#2a2a2a">матчей, психологическая подготовка.</span></div>

<!-- ===== STATUS BAR ===== -->
<div class="a" style="left:0;top:1000px;width:1920px;height:30px;background:#eeeeee;border-top:1px solid #dcdcdc"></div>
<div class="t ui" style="left:20px;top:1005px;font-size:15px;color:#333">Страница: 5/11</div>
<div class="t ui" style="left:155px;top:1005px;font-size:14.5px;color:#333">Число слов:1962</div>
<div class="a" style="left:295px;top:1008px;width:25px;height:13px;border-radius:7px;background:#2d64e8"></div>
<div class="a" style="left:309px;top:1010px;width:9px;height:9px;border-radius:5px;background:#fff"></div>
<div class="t ui" style="left:327px;top:1005px;font-size:15.3px;color:#333">Проверка правописания с ИИ</div>

<!-- ===== TASKBAR ===== -->
<div class="a" style="left:0;top:1030px;width:1920px;height:50px;background:linear-gradient(90deg,#1b2733 0px,#1c2733 760px,#1f2023 880px,#201f22 1130px,#1b2634 1240px,#192634 1920px)"></div>
<div class="t" style="left:225.3px;top:192px;width:30px;height:17px;line-height:17px;text-align:center;font-size:11.5px;color:#2a2a2a">6</div>
<div class="t" style="left:253.8px;top:192px;width:30px;height:17px;line-height:17px;text-align:center;font-size:11.5px;color:#2a2a2a">4</div>
<div class="t" style="left:281.6px;top:192px;width:30px;height:17px;line-height:17px;text-align:center;font-size:11.5px;color:#2a2a2a">2</div>
<div class="t" style="left:337.8px;top:192px;width:30px;height:17px;line-height:17px;text-align:center;font-size:11.5px;color:#2a2a2a">2</div>
<div class="t" style="left:365.8px;top:192px;width:30px;height:17px;line-height:17px;text-align:center;font-size:11.5px;color:#2a2a2a">4</div>
<div class="t" style="left:393.8px;top:192px;width:30px;height:17px;line-height:17px;text-align:center;font-size:11.5px;color:#2a2a2a">6</div>
<div class="t" style="left:421.8px;top:192px;width:30px;height:17px;line-height:17px;text-align:center;font-size:11.5px;color:#2a2a2a">8</div>
<div class="t" style="left:449.8px;top:192px;width:30px;height:17px;line-height:17px;text-align:center;font-size:11.5px;color:#2a2a2a">10</div>
<div class="t" style="left:477.8px;top:192px;width:30px;height:17px;line-height:17px;text-align:center;font-size:11.5px;color:#2a2a2a">12</div>
<div class="t" style="left:505.79999999999995px;top:192px;width:30px;height:17px;line-height:17px;text-align:center;font-size:11.5px;color:#2a2a2a">14</div>
<div class="t" style="left:533.8px;top:192px;width:30px;height:17px;line-height:17px;text-align:center;font-size:11.5px;color:#2a2a2a">16</div>
<div class="t" style="left:561.8px;top:192px;width:30px;height:17px;line-height:17px;text-align:center;font-size:11.5px;color:#2a2a2a">18</div>
<div class="t" style="left:589.8px;top:192px;width:30px;height:17px;line-height:17px;text-align:center;font-size:11.5px;color:#2a2a2a">20</div>
<div class="t" style="left:617.8px;top:192px;width:30px;height:17px;line-height:17px;text-align:center;font-size:11.5px;color:#2a2a2a">22</div>
<div class="t" style="left:645.8px;top:192px;width:30px;height:17px;line-height:17px;text-align:center;font-size:11.5px;color:#2a2a2a">24</div>
<div class="t" style="left:673.8px;top:192px;width:30px;height:17px;line-height:17px;text-align:center;font-size:11.5px;color:#2a2a2a">26</div>
<div class="t" style="left:701.8px;top:192px;width:30px;height:17px;line-height:17px;text-align:center;font-size:11.5px;color:#2a2a2a">28</div>
<div class="t" style="left:729.8px;top:192px;width:30px;height:17px;line-height:17px;text-align:center;font-size:11.5px;color:#2a2a2a">30</div>
<div class="t" style="left:757.8px;top:192px;width:30px;height:17px;line-height:17px;text-align:center;font-size:11.5px;color:#2a2a2a">32</div>
<div class="t" style="left:785.8px;top:192px;width:30px;height:17px;line-height:17px;text-align:center;font-size:11.5px;color:#2a2a2a">34</div>
<div class="t" style="left:813.8px;top:192px;width:30px;height:17px;line-height:17px;text-align:center;font-size:11.5px;color:#2a2a2a">36</div>
<div class="t" style="left:841.8px;top:192px;width:30px;height:17px;line-height:17px;text-align:center;font-size:11.5px;color:#2a2a2a">38</div>
<div class="t" style="left:869.8px;top:192px;width:30px;height:17px;line-height:17px;text-align:center;font-size:11.5px;color:#2a2a2a">40</div>
<svg style="left:318px;top:185px" width="13" height="36"><path d="M1.5 1.5h10v4L6.5 11 1.5 5.5z" fill="#fff" stroke="#6a6a6a" stroke-width="1.1" stroke-linejoin="round"/><path d="M6.5 16l5 5v4.5h-10V21z" fill="#fff" stroke="#6a6a6a" stroke-width="1.1" stroke-linejoin="round"/><rect x="1.5" y="27" width="10" height="7.5" rx="2" fill="#fff" stroke="#6a6a6a" stroke-width="1.1"/></svg>
<svg style="left:863px;top:199px" width="14" height="14"><path d="M7 1.5l5.5 5v5.5h-11V6.5z" fill="#fff" stroke="#6a6a6a" stroke-width="1.1" stroke-linejoin="round"/></svg>
<div class="a" style="left:6px;top:222px;width:17px;height:778px;background:#fff"></div>
<div class="a" style="left:6px;top:222px;width:17px;height:34px;background:#d6d6d6"></div>
<div class="a" style="left:6px;top:250px;width:17px;height:10px;background:#fff;border-radius:6px 6px 0 0"></div>
<div class="t" style="left:-0.5px;top:288.7px;width:30px;height:17px;line-height:17px;text-align:center;font-size:11.5px;color:#2a2a2a;transform:rotate(-90deg)">2</div>
<div class="t" style="left:-0.5px;top:330.7px;width:30px;height:17px;line-height:17px;text-align:center;font-size:11.5px;color:#2a2a2a;transform:rotate(-90deg)">4</div>
<div class="t" style="left:-0.5px;top:372.7px;width:30px;height:17px;line-height:17px;text-align:center;font-size:11.5px;color:#2a2a2a;transform:rotate(-90deg)">6</div>
<div class="t" style="left:-0.5px;top:414.7px;width:30px;height:17px;line-height:17px;text-align:center;font-size:11.5px;color:#2a2a2a;transform:rotate(-90deg)">8</div>
<div class="t" style="left:-0.5px;top:456.7px;width:30px;height:17px;line-height:17px;text-align:center;font-size:11.5px;color:#2a2a2a;transform:rotate(-90deg)">10</div>
<div class="t" style="left:-0.5px;top:498.7px;width:30px;height:17px;line-height:17px;text-align:center;font-size:11.5px;color:#2a2a2a;transform:rotate(-90deg)">12</div>
<div class="t" style="left:-0.5px;top:540.7px;width:30px;height:17px;line-height:17px;text-align:center;font-size:11.5px;color:#2a2a2a;transform:rotate(-90deg)">14</div>
<div class="t" style="left:-0.5px;top:582.7px;width:30px;height:17px;line-height:17px;text-align:center;font-size:11.5px;color:#2a2a2a;transform:rotate(-90deg)">16</div>
<div class="t" style="left:-0.5px;top:624.7px;width:30px;height:17px;line-height:17px;text-align:center;font-size:11.5px;color:#2a2a2a;transform:rotate(-90deg)">18</div>
<div class="t" style="left:-0.5px;top:666.7px;width:30px;height:17px;line-height:17px;text-align:center;font-size:11.5px;color:#2a2a2a;transform:rotate(-90deg)">20</div>
<div class="t" style="left:-0.5px;top:708.7px;width:30px;height:17px;line-height:17px;text-align:center;font-size:11.5px;color:#2a2a2a;transform:rotate(-90deg)">22</div>
<div class="t" style="left:-0.5px;top:750.7px;width:30px;height:17px;line-height:17px;text-align:center;font-size:11.5px;color:#2a2a2a;transform:rotate(-90deg)">24</div>
<div class="t" style="left:-0.5px;top:792.7px;width:30px;height:17px;line-height:17px;text-align:center;font-size:11.5px;color:#2a2a2a;transform:rotate(-90deg)">26</div>
<div class="t" style="left:-0.5px;top:834.7px;width:30px;height:17px;line-height:17px;text-align:center;font-size:11.5px;color:#2a2a2a;transform:rotate(-90deg)">28</div>
<div class="t" style="left:-0.5px;top:876.7px;width:30px;height:17px;line-height:17px;text-align:center;font-size:11.5px;color:#2a2a2a;transform:rotate(-90deg)">30</div>
<div class="t" style="left:-0.5px;top:918.7px;width:30px;height:17px;line-height:17px;text-align:center;font-size:11.5px;color:#2a2a2a;transform:rotate(-90deg)">32</div>
<div class="t" style="left:-0.5px;top:960.7px;width:30px;height:17px;line-height:17px;text-align:center;font-size:11.5px;color:#2a2a2a;transform:rotate(-90deg)">34</div>
<div class="a" style="left:1834px;top:465px;width:10px;height:87px;border-radius:5px;background:#d3d3d3"></div>
<svg style="left:1833px;top:194px" width="12" height="12"><path d="M1.5 0.5h9L6 5z" fill="#777"/><path d="M1.5 7.5v3h9v-3" fill="none" stroke="#777" stroke-width="2"/></svg>
<svg style="left:1834px;top:216px" width="10" height="8"><path d="M5 1l4 6H1z" fill="#777"/></svg>
<svg style="left:1833px;top:921px" width="10" height="8"><path d="M5 7l4-6H1z" fill="#777"/></svg>
<svg style="left:1833px;top:939px" width="10" height="12"><path d="M5 0.5l4 4.5H1zM5 6l4 4.5H1z" fill="#777"/></svg>
<svg style="left:1833px;top:959px" width="10" height="10"><rect x="1.5" y="1.5" width="7" height="7" rx="1" fill="none" stroke="#777" stroke-width="1.6"/></svg>
<svg style="left:1833px;top:979px" width="10" height="12"><path d="M5 5.5l4-4.5H1zM5 11l4-4.5H1z" fill="#777"/></svg>
<div class="a" style="left:1849px;top:185px;width:1px;height:815px;background:#d3d3d3"></div>
<svg style="left:1875px;top:214px" width="20" height="3"><path d="M1 1.5h16" fill="none" stroke="#777" stroke-width="1.6" stroke-width="1.3" stroke-linecap="round" stroke-linejoin="round"/></svg>
<svg style="left:1875px;top:245px" width="21" height="21"><path d="M3 15l9-11 4 3.5-9 11H3z M11 5.5l4 3.5M1 20h19" fill="none" stroke="#444" stroke-width="1.3" stroke-linecap="round" stroke-linejoin="round"/></svg>
<svg style="left:1876px;top:295px" width="20" height="20"><path d="M1.5 1.5L18 7.5l-6.5 2.8L18 17l-1 1-6.8-6.8L7.5 18z" fill="none" stroke="#444" stroke-width="1.3" stroke-linecap="round" stroke-linejoin="round"/></svg>
<svg style="left:1877px;top:345px" width="18" height="21"><rect x="1.5" y="9" width="15" height="10.5" rx="1" fill="none" stroke="#444" stroke-width="1.3" stroke-linecap="round" stroke-linejoin="round"/><path d="M4.5 9V6a4.5 4.5 0 0 1 9 0v3" fill="none" stroke="#444" stroke-width="1.3" stroke-linecap="round" stroke-linejoin="round"/></svg>
<svg style="left:1874px;top:398px" width="22" height="16"><path d="M6 3L1.5 8 6 13M16 3l4.5 5-4.5 5M12.5 1L9.5 15" fill="none" stroke="#444" stroke-width="1.3" stroke-linecap="round" stroke-linejoin="round"/></svg>
<svg style="left:1875px;top:445px" width="21" height="20"><path d="M1 5h19M1 15h19" fill="none" stroke="#444" stroke-width="1.3" stroke-linecap="round" stroke-linejoin="round"/><circle cx="7" cy="5" r="3" fill="#eee" stroke="#444" stroke-width="1.3"/><circle cx="14" cy="15" r="3" fill="#eee" stroke="#444" stroke-width="1.3"/></svg>
<svg style="left:1875px;top:494px" width="21" height="21"><path d="M4 5.5A8.5 8.5 0 1 1 2 11M1.5 2v4.5H6M10.5 6v5l3.5 3" fill="none" stroke="#444" stroke-width="1.3" stroke-linecap="round" stroke-linejoin="round"/></svg>
<svg style="left:1875px;top:544px" width="21" height="21"><path d="M2 1v19h3M2 8h3" fill="none" stroke="#444" stroke-width="1.3" stroke-linecap="round" stroke-linejoin="round"/><rect x="6" y="3.5" width="14" height="7" rx="0.5" fill="none" stroke="#444" stroke-width="1.3" stroke-linecap="round" stroke-linejoin="round"/><rect x="6" y="12.5" width="14" height="7" rx="0.5" fill="none" stroke="#444" stroke-width="1.3" stroke-linecap="round" stroke-linejoin="round"/></svg>
<svg style="left:1874px;top:594px" width="22" height="22"><circle cx="11" cy="11" r="9.5" fill="none" stroke="#444" stroke-width="1.3" stroke-linecap="round" stroke-linejoin="round"/><path d="M8 8.5a3 3 0 1 1 4.5 2.6c-1 .6-1.5 1.2-1.5 2.4" fill="none" stroke="#444" stroke-width="1.3" stroke-linecap="round" stroke-linejoin="round"/><circle cx="11" cy="16.5" r="0.9" fill="#444"/></svg>
<svg style="left:1875px;top:644px" width="21" height="21"><path d="M4 4.5h12v5M4 19.5V4.5" fill="none" stroke="#444" stroke-width="1.3" stroke-linecap="round" stroke-linejoin="round"/><path d="M1.5 2v15.5h8M7 1.5h11.5v6" fill="none" stroke="#444" stroke-width="1.3" stroke-linecap="round" stroke-linejoin="round"/><path d="M13 13l5 5M18 13l-5 5" fill="none" stroke="#444" stroke-width="1.3" stroke-linecap="round" stroke-linejoin="round"/></svg>
<svg style="left:1876px;top:695px" width="20" height="20"><rect x="1" y="1" width="7.5" height="7.5" rx="2.5" fill="none" stroke="#bbb" stroke-width="1.3"/><rect x="11.5" y="1" width="7.5" height="7.5" rx="2.5" fill="none" stroke="#bbb" stroke-width="1.3"/><rect x="1" y="11.5" width="7.5" height="7.5" rx="2.5" fill="none" stroke="#bbb" stroke-width="1.3"/><rect x="11.5" y="11.5" width="7.5" height="7.5" rx="2.5" fill="none" stroke="#bbb" stroke-width="1.3"/></svg>
<svg style="left:1218px;top:1005px" width="19" height="20"><path d="M3 1.5h13v17H3z" fill="none" stroke="#444" stroke-width="1.3" stroke-linecap="round" stroke-linejoin="round"/><path d="M9.5 5v5l3 2" fill="none" stroke="#444" stroke-width="1.3" stroke-linecap="round" stroke-linejoin="round"/></svg>
<svg style="left:1259px;top:1004px" width="22" height="22"><path d="M2 1.5h9v19H2zM4.5 17.5h4M1 10.5h11M9 7.5l3 3-3 3" fill="none" stroke="#444" stroke-width="1.3" stroke-linecap="round" stroke-linejoin="round"/></svg>
<div class="a" style="left:1303px;top:1001px;width:30px;height:28px;border-radius:4px;background:#dedede"></div>
<svg style="left:1309px;top:1006px" width="19" height="19"><path d="M2 1.5h15v16H2zM5.5 6h8M5.5 9.5h8M5.5 13h5" fill="none" stroke="#444" stroke-width="1.3" stroke-linecap="round" stroke-linejoin="round"/></svg>
<svg style="left:1348px;top:1006px" width="20" height="19"><path d="M1.5 2h3M7 2h11M4 7h3M9.5 7h9M4 12h3M9.5 12h9M1.5 17h3M7 17h11" fill="none" stroke="#444" stroke-width="1.3" stroke-linecap="round" stroke-linejoin="round"/></svg>
<svg style="left:1391px;top:1006px" width="16" height="19"><path d="M2 1.5l12.5 8L2 17.5z" fill="none" stroke="#444" stroke-width="1.3" stroke-linecap="round" stroke-linejoin="round"/></svg>
<svg style="left:1428px;top:1005px" width="21" height="21"><circle cx="10.5" cy="10.5" r="9" fill="none" stroke="#444" stroke-width="1.3" stroke-linecap="round" stroke-linejoin="round"/><ellipse cx="10.5" cy="10.5" rx="4" ry="9" fill="none" stroke="#444" stroke-width="1.3" stroke-linecap="round" stroke-linejoin="round"/><path d="M1.5 10.5h18M3 5.5h15M3 15.5h15" fill="none" stroke="#444" stroke-width="1.3" stroke-linecap="round" stroke-linejoin="round"/></svg>
<svg style="left:1469px;top:1007px" width="36" height="16"><path d="M1.5 8c4-7 15-7 19 0-4 7-15 7-19 0z" fill="none" stroke="#444" stroke-width="1.3" stroke-linecap="round" stroke-linejoin="round"/><circle cx="11" cy="8" r="3" fill="none" stroke="#444" stroke-width="1.3" stroke-linecap="round" stroke-linejoin="round"/><path d="M26 6l3.5 3.5L33 6" fill="none" stroke="#444" stroke-width="1.5"/></svg>
<svg style="left:1537px;top:1005px" width="21" height="21"><path d="M1.5 6V1.5H6M15 1.5h4.5V6M19.5 15v4.5H15M6 19.5H1.5V15" fill="none" stroke="#444" stroke-width="1.3" stroke-linecap="round" stroke-linejoin="round"/><rect x="6" y="6" width="9" height="9" rx="1" fill="none" stroke="#444" stroke-width="1.3" stroke-linecap="round" stroke-linejoin="round"/></svg>
<div class="t ui" style="left:1585px;top:1005px;font-size:14.5px;color:#333">70%</div>
<svg style="left:1629px;top:1012px" width="9" height="6"><path d="M1 1l3.5 3.5L8 1" fill="none" stroke="#444" stroke-width="1.5"/></svg>
<svg style="left:1658px;top:1014px" width="18" height="2"><path d="M0 1h18" stroke="#333" stroke-width="2.2"/></svg>
<div class="a" style="left:1693px;top:1014px;width:132px;height:1.5px;background:#b8b8b8"></div>
<div class="a" style="left:1693px;top:1013.5px;width:46px;height:2px;background:#2d64e8"></div>
<div class="a" style="left:1733px;top:1009px;width:12px;height:12px;border-radius:6px;background:#fff;border:1px solid #cfcfcf"></div>
<div class="a" style="left:1737px;top:1013px;width:4px;height:4px;border-radius:2px;background:#888"></div>
<svg style="left:1842px;top:1007px" width="16" height="16"><path d="M8 1v14M1 8h14" stroke="#333" stroke-width="2"/></svg>
<svg style="left:1881px;top:1005px" width="21" height="21"><path d="M1.5 7V1.5H7M14 1.5h5.5V7M19.5 14v5.5H14M7 19.5H1.5V14M1.5 1.5l5 5M19.5 1.5l-5 5M19.5 19.5l-5-5M1.5 19.5l5-5" fill="none" stroke="#444" stroke-width="1.3" stroke-linecap="round" stroke-linejoin="round"/></svg>
<svg style="left:20px;top:1045px" width="20" height="20"><path d="M0 2.8L8.2 1.7V9.5H0zM9.3 1.5L20 0V9.5H9.3zM0 10.5h8.2v7.8L0 17.2zM9.3 10.5H20V20L9.3 18.5z" fill="#fff"/></svg>
<div class="a" style="left:60px;top:1030px;width:360px;height:50px;background:#f0f0f0;border-top:1px solid #c8c8c8"></div>
<svg style="left:75px;top:1045px" width="21" height="21"><circle cx="12.5" cy="8.5" r="6.5" fill="none" stroke="#222" stroke-width="1.6"/><path d="M8 13L1 20" stroke="#222" stroke-width="1.8"/></svg>
<div class="t ui" style="left:110px;top:1044px;font-size:17px;line-height:22px;height:22px;color:#222">Поиск</div>
<svg style="left:322px;top:1032px" width="97" height="46"><defs><linearGradient id="sky" x1="0" y1="0" x2="0" y2="1"><stop offset="0" stop-color="#7f8fd8"/><stop offset="0.35" stop-color="#b9a6dc"/><stop offset="0.62" stop-color="#f0b8c0"/><stop offset="0.75" stop-color="#e8b0a0"/><stop offset="1" stop-color="#2a2c50"/></linearGradient><clipPath id="cl"><path d="M2 30C0 14 20 3 48 3s49 11 47 27c-1 9-20 14-47 14S3 39 2 30z"/></clipPath></defs><g clip-path="url(#cl)"><rect width="97" height="46" fill="url(#sky)"/><path d="M45 6c8-1 14 1 18 2" stroke="#f4b0d0" stroke-width="2" fill="none"/><path d="M60 13c10-1 20 0 30 2" stroke="#f0a8c8" stroke-width="2" fill="none"/><path d="M0 33L5 15h12l3 5 4 1 2 6h4l3-8 2 1 2 7 4 2 8-2 4-4 6 2 6-3 8 1 4-3 8 2 6 4v20H0z" fill="#433a5c"/><path d="M3 31L7 16h10l2 6 5 3-1 6z" fill="#2e2844"/><path d="M36 30l3-10 2 2 1 8z" fill="#2e2844"/><path d="M0 36h97v10H0z" fill="#25284a"/><ellipse cx="52" cy="35" rx="40" ry="4" fill="#7478a8"/><path d="M0 40h97v6H0z" fill="#1e2040"/></g></svg>
<div class="a" style="left:440px;top:1046px;width:19px;height:19px;border-radius:10px;border:2.2px solid #fff"></div>
<svg style="left:499px;top:1040px" width="31" height="31"><defs><linearGradient id="eg" x1="0.1" y1="0.9" x2="0.9" y2="0.15"><stop offset="0" stop-color="#1a86dc"/><stop offset="0.6" stop-color="#22a8e2"/><stop offset="1" stop-color="#62d562"/></linearGradient></defs><circle cx="15.5" cy="15.5" r="14.5" fill="url(#eg)"/><path d="M1.3 17.5C2.5 25 8.5 30 15.5 30c1.5 0 2.5-.2 3.5-.5C12.5 29 8 24.5 8 19.5 8 15.5 11 13 14.5 13c3 0 5 2 5 4.5h10c-1-2-4-4.5-10-6-7-1.6-15 1-18.2 6z" fill="#0d55b8"/><path d="M19.5 17.5h10c.4 2-1 3.5-4 3.5h-6z" fill="#1e9be0"/><ellipse cx="15.5" cy="18" rx="3.2" ry="2.6" fill="#1b2733"/></svg>
<svg style="left:561px;top:1042px" width="28" height="26"><path d="M0.5 3a1.5 1.5 0 0 1 1.5-1.5h7.5l2.5 2.5h14a1.5 1.5 0 0 1 1.5 1.5V8H0.5z" fill="#e3a526"/><path d="M0.5 6.5h27V21a1.5 1.5 0 0 1-1.5 1.5H2A1.5 1.5 0 0 1 .5 21z" fill="#fbd36c"/><path d="M5 26v-9a2 2 0 0 1 2-2h14a2 2 0 0 1 2 2v9h-4.5v-6.5h-9V26z" fill="#3d9ae8"/></svg>
<div class="a" style="left:551px;top:1077px;width:51px;height:3px;background:#7db7f0"></div>
<svg style="left:622px;top:1040px" width="30" height="31"><defs><linearGradient id="sg" x1="0" y1="0" x2="0" y2="1"><stop offset="0" stop-color="#ffffff"/><stop offset="1" stop-color="#e2e2e2"/></linearGradient></defs><path d="M9.5 7.5V2.5h11v5" fill="none" stroke="#2aa8ec" stroke-width="2"/><path d="M1.5 7.5h27v19a3.5 3.5 0 0 1-3.5 3.5H5a3.5 3.5 0 0 1-3.5-3.5z" fill="url(#sg)"/><rect x="9" y="11" width="5.2" height="5.2" fill="#f35325"/><rect x="15.3" y="11" width="5.2" height="5.2" fill="#81bc06"/><rect x="9" y="17.3" width="5.2" height="5.2" fill="#05a6f0"/><rect x="15.3" y="17.3" width="5.2" height="5.2" fill="#ffba08"/></svg>
<svg style="left:684px;top:1040px" width="31" height="30"><defs><linearGradient id="og" x1="0" y1="0" x2="1" y2="1"><stop offset="0" stop-color="#3f7cf0"/><stop offset="1" stop-color="#22c0f8"/></linearGradient></defs><path d="M4 11L17 2l13 9v14a3 3 0 0 1-3 3H7a3 3 0 0 1-3-3z" fill="url(#og)"/><path d="M6 10l11-7.5L29 10l-8 6z" fill="#6a6ef0"/><path d="M10 14l12-7 7 4-10 6z" fill="#4a7af0"/><rect x="1" y="14" width="12" height="12" rx="2" fill="#1560d0"/><ellipse cx="7" cy="20" rx="3" ry="3.3" fill="none" stroke="#fff" stroke-width="1.8"/></svg>
<svg style="left:750px;top:1041px" width="22" height="28"><path d="M1 1h14l6 6v20H1z" fill="#f4f4f4"/><path d="M15 1v6h6" fill="#cfcfcf"/></svg>
<div class="a" style="left:809px;top:1041px;width:29px;height:29px;border-radius:15px;background:#fc3f1d"></div>
<div class="t" style="left:809px;top:1043px;width:29px;height:25px;line-height:25px;text-align:center;color:#fff;font-size:21px;font-weight:bold">Я</div>
<div class="a" style="left:871px;top:1041px;width:29px;height:29px;border-radius:15px;background:#fff"></div>
<svg style="left:876px;top:1046px" width="20" height="20"><path d="M3 2l7 9 7-9" fill="none" stroke="#ff5a2a" stroke-width="3"/><path d="M10 10v9" stroke="#ff5a2a" stroke-width="3"/><path d="M17 2l-7 9" stroke="#e040c0" stroke-width="3"/></svg>
<div class="a" style="left:861px;top:1077px;width:51px;height:3px;background:#7db7f0"></div>
<div class="a" style="left:933px;top:1041px;width:30px;height:30px;border-radius:15px;background:conic-gradient(from 20deg,#ff3f8e,#ffb02a,#f5e83a,#4cd964,#22c7f0,#6a5cff,#d34cf0,#ff3f8e);-webkit-mask:radial-gradient(circle,transparent 5.5px,#000 6.5px);filter:blur(0.6px)"></div>
<div class="a" style="left:980px;top:1030px;width:61px;height:50px;background:#3c3c3f"></div>
<div class="a" style="left:980px;top:1077px;width:61px;height:3px;background:#7db7f0"></div>
<div class="a" style="left:995px;top:1040px;width:30px;height:30px;border-radius:6px;background:#ee1c2e"></div>
<svg style="left:995px;top:1040px" width="30" height="30"><path d="M7 10h7.5L12.5 21.5zM16.5 10h7.5L19 21.5z" fill="none" stroke="#fff" stroke-width="2.4" stroke-linejoin="round"/></svg>
<svg style="left:1579px;top:1050px" width="18" height="10"><path d="M1 9l8-8 8 8" fill="none" stroke="#fff" stroke-width="1.4"/></svg>
<svg style="left:1607px;top:1048px" width="22" height="14"><rect x="1" y="2" width="18" height="10" rx="1" fill="none" stroke="#fff" stroke-width="1.3"/><rect x="3" y="4" width="9" height="6" fill="#fff"/><rect x="19.5" y="5" width="2" height="4" fill="#fff"/></svg>
<svg style="left:1639px;top:1045px" width="20" height="20"><rect x="1.5" y="4" width="11" height="12" rx="3" fill="none" stroke="#fff" stroke-width="1.3"/><path d="M13 8l5-3v10l-5-3M5 1.5h4" fill="none" stroke="#fff" stroke-width="1.3"/></svg>
<div class="a" style="left:1668px;top:1045px;width:21px;height:21px;border-radius:11px;background:#f6d41c"></div>
<svg style="left:1668px;top:1045px" width="21" height="21"><path d="M3 14c3 5 12 5 15-1" fill="none" stroke="#2a9a3a" stroke-width="3"/><path d="M10.5 5.5v10M5.5 10.5h10" stroke="#1c7a2c" stroke-width="3"/></svg>
<svg style="left:1699px;top:1045px" width="22" height="20"><path d="M2 18A16 16 0 0 1 18 2M6 18A12 12 0 0 1 18 6M10 18a8 8 0 0 1 8-8M14 18a4 4 0 0 1 4-4" fill="none" stroke="#fff" stroke-width="1.3"/><circle cx="18" cy="18" r="1.5" fill="#fff"/></svg>
<div class="t ui" style="left:1729px;top:1045px;font-size:15.5px;color:#fff">РУС</div>
<div class="t ui" style="left:1760px;top:1033px;width:100px;text-align:center;font-size:15px;color:#fff">12:45</div>
<div class="t ui" style="left:1760px;top:1056px;width:100px;text-align:center;font-size:14.8px;color:#fff">20.04.2026</div>
<svg style="left:1868px;top:1045px" width="22" height="21"><path d="M1 1.5h20v14H8l-4 4v-4H1z" fill="none" stroke="#fff" stroke-width="1.3"/></svg>
</body></html>
